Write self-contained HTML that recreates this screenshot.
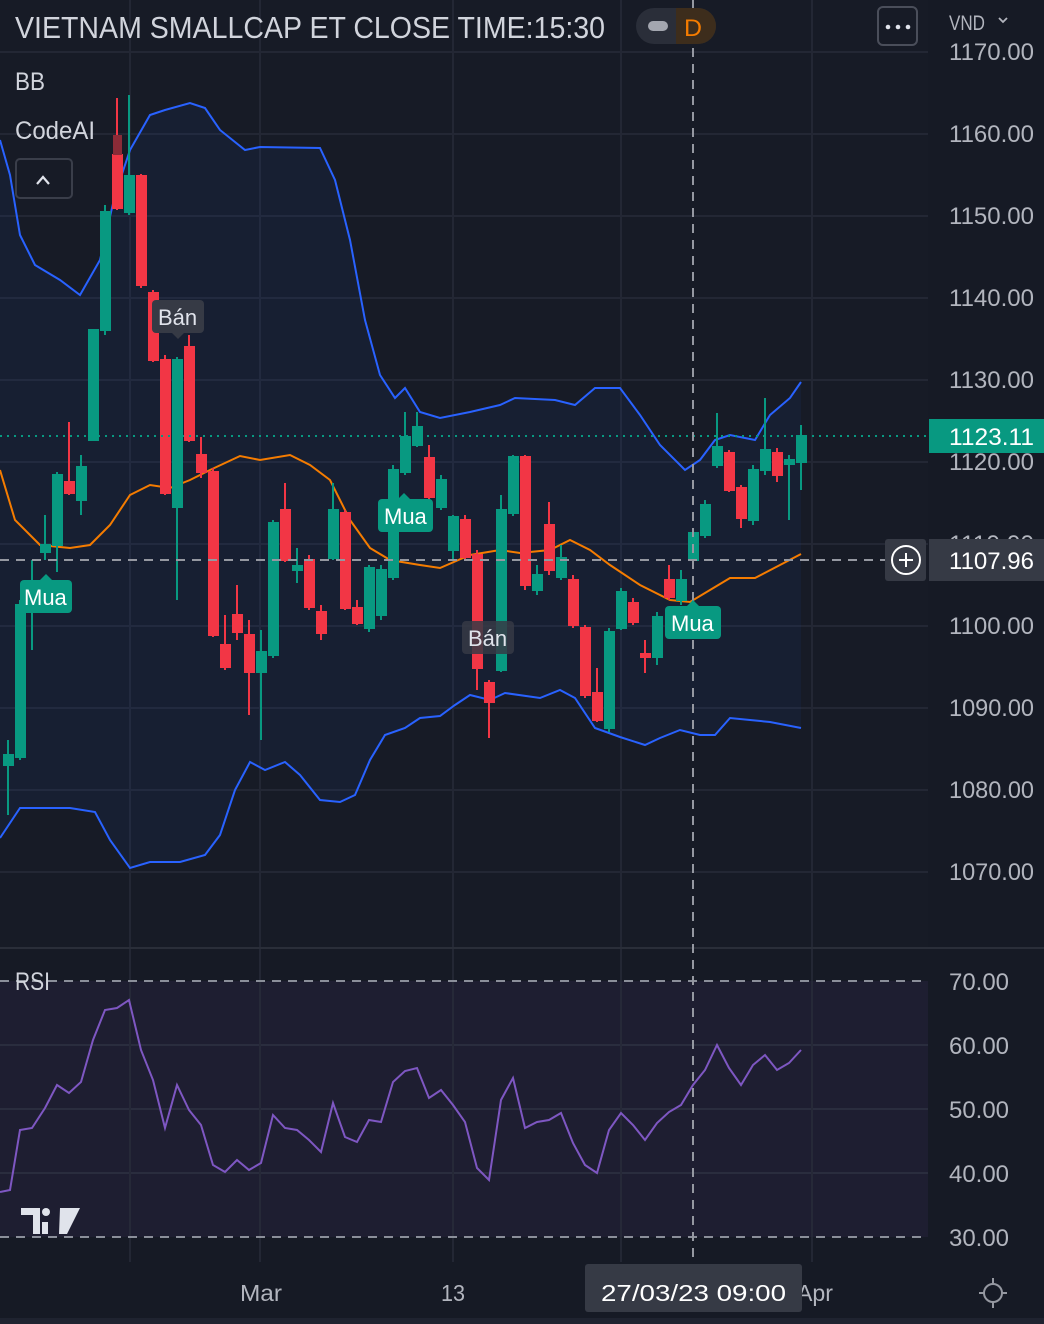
<!DOCTYPE html>
<html><head><meta charset="utf-8"><style>
html,body{margin:0;padding:0;background:#161a25;}
svg{display:block;font-family:"Liberation Sans",sans-serif;}
</style></head><body>
<svg width="1044" height="1324" viewBox="0 0 1044 1324" xmlns="http://www.w3.org/2000/svg">
<rect width="1044" height="1324" fill="#161a25"/>
<rect x="0" y="0" width="928" height="948" fill="#171b26"/>
<!-- grid -->
<g stroke="#232734" stroke-width="2">
<line x1="0" y1="52" x2="928" y2="52"/><line x1="0" y1="134" x2="928" y2="134"/><line x1="0" y1="216" x2="928" y2="216"/><line x1="0" y1="298" x2="928" y2="298"/><line x1="0" y1="380" x2="928" y2="380"/><line x1="0" y1="462" x2="928" y2="462"/><line x1="0" y1="544" x2="928" y2="544"/><line x1="0" y1="626" x2="928" y2="626"/><line x1="0" y1="708" x2="928" y2="708"/><line x1="0" y1="790" x2="928" y2="790"/><line x1="0" y1="872" x2="928" y2="872"/>
<line x1="130" y1="0" x2="130" y2="1262"/><line x1="260" y1="0" x2="260" y2="1262"/><line x1="453" y1="0" x2="453" y2="1262"/><line x1="621" y1="0" x2="621" y2="1262"/><line x1="812" y1="0" x2="812" y2="1262"/>
</g>
<line x1="0" y1="948" x2="1044" y2="948" stroke="#2a2e39" stroke-width="2"/>
<!-- RSI pane bg -->
<rect x="0" y="981" width="928" height="256" fill="#1f1f33" opacity="0.9"/>
<g stroke="#2a2d3e" stroke-width="2"><line x1="0" y1="1045" x2="928" y2="1045"/><line x1="0" y1="1109" x2="928" y2="1109"/><line x1="0" y1="1173" x2="928" y2="1173"/></g>
<g stroke="#262938" stroke-width="2"><line x1="130" y1="981" x2="130" y2="1237"/><line x1="260" y1="981" x2="260" y2="1237"/><line x1="453" y1="981" x2="453" y2="1237"/><line x1="621" y1="981" x2="621" y2="1237"/><line x1="812" y1="981" x2="812" y2="1237"/></g>
<g stroke="#8b8f9a" stroke-width="2" stroke-dasharray="9,7"><line x1="0" y1="981" x2="928" y2="981"/><line x1="0" y1="1237" x2="928" y2="1237"/></g>
<!-- BB fill -->
<polygon fill="#2962ff" fill-opacity="0.06" points="0,140 10,175 20,235 35,265 60,280 80,295 100,260 115,195 130,150 150,115 165,110 190,103 205,108 220,130 245,150 260,147 320,148 335,180 350,240 365,320 380,375 395,398 405,388 420,412 440,418 470,412 500,405 515,398 555,400 575,405 595,388 620,388 640,415 660,445 685,470 700,460 715,440 730,435 755,440 770,415 790,398 801,382 801,728 770,722 750,720 730,718 715,735 700,735 680,730 660,738 645,745 620,737 595,728 575,698 560,690 540,698 505,693 490,700 470,695 455,705 440,716 420,718 405,728 385,735 370,760 355,795 340,802 320,800 300,775 285,762 265,770 250,762 235,790 220,835 205,855 180,862 150,862 130,868 110,840 95,812 70,808 40,808 20,808 0,838"/>
<polyline fill="none" stroke="#2962ff" stroke-width="2" points="0,140 10,175 20,235 35,265 60,280 80,295 100,260 115,195 130,150 150,115 165,110 190,103 205,108 220,130 245,150 260,147 320,148 335,180 350,240 365,320 380,375 395,398 405,388 420,412 440,418 470,412 500,405 515,398 555,400 575,405 595,388 620,388 640,415 660,445 685,470 700,460 715,440 730,435 755,440 770,415 790,398 801,382"/>
<polyline fill="none" stroke="#2962ff" stroke-width="2" points="0,838 20,808 40,808 70,808 95,812 110,840 130,868 150,862 180,862 205,855 220,835 235,790 250,762 265,770 285,762 300,775 320,800 340,802 355,795 370,760 385,735 405,728 420,718 440,716 455,705 470,695 490,700 505,693 540,698 560,690 575,698 595,728 620,737 645,745 660,738 680,730 700,735 715,735 730,718 750,720 770,722 801,728"/>
<polyline fill="none" stroke="#f57c00" stroke-width="2" points="0,470 15,520 40,545 70,548 90,545 110,525 130,495 150,485 170,488 190,480 210,470 240,456 260,460 290,455 310,465 330,480 350,520 370,548 390,560 420,565 440,568 470,555 500,550 520,553 550,550 570,540 590,550 610,565 640,585 670,600 690,602 710,590 730,578 755,578 780,565 801,554"/>
<!-- candles -->
<g stroke-width="2">
<g fill="#089981" stroke="#089981">
<line x1="8" y1="740" x2="8" y2="815"/><rect x="4" y="755" width="9" height="10"/>
<line x1="20" y1="600" x2="20" y2="760"/><rect x="16" y="605" width="9" height="152"/>
<line x1="32" y1="560" x2="32" y2="650"/><rect x="28" y="598" width="9" height="12"/>
<line x1="45" y1="515" x2="45" y2="560"/><rect x="41" y="545" width="9" height="7"/>
<line x1="57" y1="472" x2="57" y2="572"/><rect x="53" y="475" width="9" height="70"/>
<line x1="81" y1="455" x2="81" y2="515"/><rect x="77" y="467" width="9" height="33"/>
<rect x="89" y="330" width="9" height="110"/>
<line x1="105" y1="205" x2="105" y2="335"/><rect x="101" y="212" width="9" height="118"/>
<line x1="129" y1="95" x2="129" y2="215"/><rect x="125" y="176" width="9" height="36"/>
<line x1="177" y1="357" x2="177" y2="600"/><rect x="173" y="360" width="9" height="147"/>
<line x1="261" y1="630" x2="261" y2="740"/><rect x="257" y="652" width="9" height="20"/>
<line x1="273" y1="520" x2="273" y2="658"/><rect x="269" y="523" width="9" height="132"/>
<line x1="297" y1="548" x2="297" y2="583"/><rect x="293" y="566" width="9" height="4"/>
<line x1="333" y1="483" x2="333" y2="560"/><rect x="329" y="510" width="9" height="48"/>
<line x1="369" y1="565" x2="369" y2="632"/><rect x="365" y="568" width="9" height="60"/>
<line x1="381" y1="565" x2="381" y2="620"/><rect x="377" y="570" width="9" height="45"/>
<line x1="393" y1="465" x2="393" y2="580"/><rect x="389" y="470" width="9" height="107"/>
<line x1="405" y1="412" x2="405" y2="475"/><rect x="401" y="437" width="9" height="35"/>
<line x1="417" y1="412" x2="417" y2="447"/><rect x="413" y="427" width="9" height="18"/>
<line x1="441" y1="475" x2="441" y2="510"/><rect x="437" y="480" width="9" height="27"/>
<line x1="453" y1="515" x2="453" y2="560"/><rect x="449" y="517" width="9" height="33"/>
<line x1="501" y1="495" x2="501" y2="672"/><rect x="497" y="510" width="9" height="160"/>
<line x1="513" y1="455" x2="513" y2="516"/><rect x="509" y="457" width="9" height="56"/>
<line x1="537" y1="565" x2="537" y2="595"/><rect x="533" y="575" width="9" height="15"/>
<line x1="561" y1="545" x2="561" y2="580"/><rect x="557" y="558" width="9" height="19"/>
<line x1="609" y1="628" x2="609" y2="732"/><rect x="605" y="632" width="9" height="96"/>
<line x1="621" y1="588" x2="621" y2="630"/><rect x="617" y="592" width="9" height="36"/>
<line x1="657" y1="612" x2="657" y2="665"/><rect x="653" y="617" width="9" height="40"/>
<line x1="681" y1="570" x2="681" y2="605"/><rect x="677" y="580" width="9" height="20"/>
<line x1="693" y1="530" x2="693" y2="565"/><rect x="689" y="533" width="9" height="27"/>
<line x1="705" y1="500" x2="705" y2="538"/><rect x="701" y="505" width="9" height="30"/>
<line x1="717" y1="413" x2="717" y2="468"/><rect x="713" y="447" width="9" height="18"/>
<line x1="753" y1="465" x2="753" y2="525"/><rect x="749" y="470" width="9" height="50"/>
<line x1="765" y1="398" x2="765" y2="475"/><rect x="761" y="450" width="9" height="20"/>
<line x1="789" y1="455" x2="789" y2="520"/><rect x="785" y="460" width="9" height="4"/>
<line x1="801" y1="425" x2="801" y2="490"/><rect x="797" y="436" width="9" height="26"/>
</g>
<g fill="#f23645" stroke="#f23645">
<line x1="69" y1="422" x2="69" y2="495"/><rect x="65" y="482" width="9" height="11"/>
<line x1="117" y1="98" x2="117" y2="210"/><rect x="113" y="155" width="9" height="53"/>
<line x1="141" y1="174" x2="141" y2="288"/><rect x="137" y="176" width="9" height="109"/>
<line x1="153" y1="290" x2="153" y2="362"/><rect x="149" y="293" width="9" height="67"/>
<line x1="165" y1="355" x2="165" y2="495"/><rect x="161" y="360" width="9" height="133"/>
<line x1="189" y1="335" x2="189" y2="442"/><rect x="185" y="347" width="9" height="93"/>
<line x1="201" y1="437" x2="201" y2="478"/><rect x="197" y="455" width="9" height="17"/>
<line x1="213" y1="468" x2="213" y2="637"/><rect x="209" y="472" width="9" height="163"/>
<line x1="225" y1="615" x2="225" y2="670"/><rect x="221" y="645" width="9" height="22"/>
<line x1="237" y1="585" x2="237" y2="640"/><rect x="233" y="615" width="9" height="17"/>
<line x1="249" y1="620" x2="249" y2="715"/><rect x="245" y="635" width="9" height="37"/>
<line x1="285" y1="483" x2="285" y2="562"/><rect x="281" y="510" width="9" height="50"/>
<line x1="309" y1="555" x2="309" y2="610"/><rect x="305" y="560" width="9" height="47"/>
<line x1="321" y1="605" x2="321" y2="640"/><rect x="317" y="612" width="9" height="21"/>
<line x1="345" y1="510" x2="345" y2="610"/><rect x="341" y="513" width="9" height="95"/>
<line x1="357" y1="600" x2="357" y2="625"/><rect x="353" y="608" width="9" height="15"/>
<line x1="429" y1="445" x2="429" y2="500"/><rect x="425" y="458" width="9" height="39"/>
<line x1="465" y1="515" x2="465" y2="560"/><rect x="461" y="520" width="9" height="37"/>
<line x1="477" y1="550" x2="477" y2="690"/><rect x="473" y="555" width="9" height="113"/>
<line x1="489" y1="680" x2="489" y2="738"/><rect x="485" y="683" width="9" height="19"/>
<line x1="525" y1="455" x2="525" y2="590"/><rect x="521" y="457" width="9" height="128"/>
<line x1="549" y1="502" x2="549" y2="575"/><rect x="545" y="525" width="9" height="45"/>
<line x1="573" y1="575" x2="573" y2="628"/><rect x="569" y="580" width="9" height="45"/>
<line x1="585" y1="625" x2="585" y2="698"/><rect x="581" y="628" width="9" height="67"/>
<line x1="597" y1="668" x2="597" y2="722"/><rect x="593" y="693" width="9" height="27"/>
<line x1="633" y1="598" x2="633" y2="625"/><rect x="629" y="603" width="9" height="19"/>
<line x1="645" y1="640" x2="645" y2="673"/><rect x="641" y="654" width="9" height="3"/>
<line x1="669" y1="565" x2="669" y2="600"/><rect x="665" y="580" width="9" height="17"/>
<line x1="729" y1="450" x2="729" y2="492"/><rect x="725" y="453" width="9" height="37"/>
<line x1="741" y1="485" x2="741" y2="528"/><rect x="737" y="488" width="9" height="30"/>
<line x1="777" y1="448" x2="777" y2="482"/><rect x="773" y="453" width="9" height="22"/>
</g>
<rect x="113" y="135" width="9" height="20" fill="#8a2b37"/>
</g>
<!-- RSI line -->
<polyline fill="none" stroke="#7e57c2" stroke-width="2" points="0,1192 10,1190 20,1130 32,1128 45,1108 57,1085 69,1093 81,1082 93,1040 105,1010 117,1008 129,1000 141,1050 153,1080 165,1128 177,1085 189,1110 201,1125 213,1165 225,1172 237,1160 249,1170 261,1163 273,1115 285,1128 297,1130 309,1140 321,1152 333,1103 345,1137 357,1142 369,1120 381,1122 393,1082 405,1071 417,1068 429,1098 441,1090 453,1105 465,1122 477,1168 489,1180 501,1100 513,1078 525,1128 537,1122 549,1120 561,1113 573,1143 585,1165 597,1173 609,1130 621,1113 633,1125 645,1140 657,1123 669,1112 681,1105 693,1085 705,1070 717,1045 729,1068 741,1085 753,1065 765,1055 777,1070 789,1063 801,1050"/>
<!-- price lines -->
<line x1="0" y1="436" x2="928" y2="436" stroke="#089981" stroke-width="2" stroke-dasharray="2,5"/>
<line x1="0" y1="560" x2="886" y2="560" stroke="#9598a1" stroke-width="2" stroke-dasharray="9,7"/>
<line x1="693" y1="0" x2="693" y2="1262" stroke="#9598a1" stroke-width="2" stroke-dasharray="9,7"/>
<!-- signal labels -->
<g font-size="22">
<rect x="152" y="300" width="52" height="33" rx="4" fill="#363a45"/><polygon points="172,333 184,333 178,339" fill="#363a45"/><text x="158" y="325" fill="#e0e3eb">Bán</text>
<rect x="462" y="621" width="52" height="33" rx="4" fill="#363a45" opacity="0.85"/><text x="468" y="646" fill="#e0e3eb">Bán</text>
<rect x="20" y="580" width="52" height="33" rx="4" fill="#089981"/><polygon points="40,580 52,580 46,574" fill="#089981"/><text x="24" y="605" fill="#fff">Mua</text>
<rect x="378" y="499" width="55" height="33" rx="4" fill="#089981"/><polygon points="398,499 410,499 404,493" fill="#089981"/><text x="384" y="524" fill="#fff">Mua</text>
<rect x="665" y="606" width="56" height="33" rx="4" fill="#089981"/><polygon points="687,606 699,606 693,600" fill="#089981"/><text x="671" y="631" fill="#fff">Mua</text>
</g>
<!-- header -->
<text x="15" y="38" font-size="31" fill="#d1d4dc" textLength="590" lengthAdjust="spacingAndGlyphs">VIETNAM SMALLCAP ET CLOSE TIME:15:30</text>
<rect x="636" y="8" width="80" height="36" rx="18" fill="#2a2e39"/>
<path d="M676 8 H698 A18 18 0 0 1 698 44 H676 Z" fill="#3d2d1c"/>
<rect x="648" y="21" width="20" height="10" rx="5" fill="#a3a6af"/>
<text x="684" y="36" font-size="24" fill="#f57c00" textLength="18" lengthAdjust="spacingAndGlyphs">D</text>
<rect x="878" y="7" width="39" height="38" rx="5" fill="none" stroke="#4a4e5a" stroke-width="2"/>
<circle cx="888" cy="27" r="2.3" fill="#e0e3eb"/><circle cx="898" cy="27" r="2.3" fill="#e0e3eb"/><circle cx="908" cy="27" r="2.3" fill="#e0e3eb"/>
<text x="949" y="30" font-size="21" fill="#b2b5be" textLength="36" lengthAdjust="spacingAndGlyphs">VND</text>
<path d="M999 18 L1003 22 L1007 18" fill="none" stroke="#b2b5be" stroke-width="1.8"/>
<text x="15" y="90" font-size="25" fill="#d1d4dc" textLength="30" lengthAdjust="spacingAndGlyphs">BB</text>
<text x="15" y="139" font-size="25" fill="#d1d4dc" textLength="80" lengthAdjust="spacingAndGlyphs">CodeAI</text>
<rect x="16" y="159" width="56" height="39" rx="4" fill="#171b26" stroke="#3a3e4a" stroke-width="2"/>
<path d="M37 184 L43 177 L49 184" fill="none" stroke="#e0e3eb" stroke-width="2.2"/>
<text x="15" y="990" font-size="25" fill="#d1d4dc" textLength="35" lengthAdjust="spacingAndGlyphs">RSI</text>
<!-- right axis -->
<g font-size="24" fill="#b2b5be">
<text x="949" y="60" textLength="85" lengthAdjust="spacingAndGlyphs">1170.00</text>
<text x="949" y="142" textLength="85" lengthAdjust="spacingAndGlyphs">1160.00</text>
<text x="949" y="224" textLength="85" lengthAdjust="spacingAndGlyphs">1150.00</text>
<text x="949" y="306" textLength="85" lengthAdjust="spacingAndGlyphs">1140.00</text>
<text x="949" y="388" textLength="85" lengthAdjust="spacingAndGlyphs">1130.00</text>
<text x="949" y="470" textLength="85" lengthAdjust="spacingAndGlyphs">1120.00</text>
<text x="949" y="552" textLength="85" lengthAdjust="spacingAndGlyphs">1110.00</text>
<text x="949" y="634" textLength="85" lengthAdjust="spacingAndGlyphs">1100.00</text>
<text x="949" y="716" textLength="85" lengthAdjust="spacingAndGlyphs">1090.00</text>
<text x="949" y="798" textLength="85" lengthAdjust="spacingAndGlyphs">1080.00</text>
<text x="949" y="880" textLength="85" lengthAdjust="spacingAndGlyphs">1070.00</text>
<text x="949" y="990" textLength="60" lengthAdjust="spacingAndGlyphs">70.00</text>
<text x="949" y="1054" textLength="60" lengthAdjust="spacingAndGlyphs">60.00</text>
<text x="949" y="1118" textLength="60" lengthAdjust="spacingAndGlyphs">50.00</text>
<text x="949" y="1182" textLength="60" lengthAdjust="spacingAndGlyphs">40.00</text>
<text x="949" y="1246" textLength="60" lengthAdjust="spacingAndGlyphs">30.00</text>
</g>
<rect x="929" y="419" width="115" height="34" fill="#089981"/>
<text x="949" y="445" font-size="24" fill="#fff" textLength="85" lengthAdjust="spacingAndGlyphs">1123.11</text>
<rect x="885" y="539" width="41" height="42" rx="3" fill="#363a45"/>
<circle cx="906" cy="560" r="14" fill="none" stroke="#fff" stroke-width="2"/>
<path d="M899 560 H913 M906 553 V567" stroke="#fff" stroke-width="2"/>
<rect x="929" y="539" width="115" height="42" fill="#363a45"/>
<text x="949" y="569" font-size="24" fill="#fff" textLength="85" lengthAdjust="spacingAndGlyphs">1107.96</text>
<!-- TV logo -->
<g fill="#e0e3eb"><path d="M21 1208 H40 V1234 H33 V1215 H21 Z"/><circle cx="46" cy="1212" r="4"/><path d="M60 1208 H80 L67 1234 H59 Z M42 1222 L48 1222 L48 1234 L42 1234 Z" fill="#e0e3eb"/></g>
<!-- bottom axis -->
<rect x="0" y="1318" width="1044" height="6" fill="#1f2330"/>
<g font-size="23" fill="#b2b5be">
<text x="240" y="1301" textLength="42" lengthAdjust="spacingAndGlyphs">Mar</text>
<text x="441" y="1301" textLength="24" lengthAdjust="spacingAndGlyphs">13</text>
<text x="797" y="1301" textLength="36" lengthAdjust="spacingAndGlyphs">Apr</text>
</g>
<rect x="585" y="1264" width="217" height="48" rx="3" fill="#363a45"/>
<text x="601" y="1301" font-size="23" fill="#fff" textLength="185" lengthAdjust="spacingAndGlyphs">27/03/23   09:00</text>
<circle cx="993" cy="1293" r="9" fill="none" stroke="#9598a1" stroke-width="2"/>
<path d="M993 1278 V1284 M993 1302 V1308 M979 1293 H984 M1002 1293 H1007" stroke="#9598a1" stroke-width="2"/>
</svg>
</body></html>
